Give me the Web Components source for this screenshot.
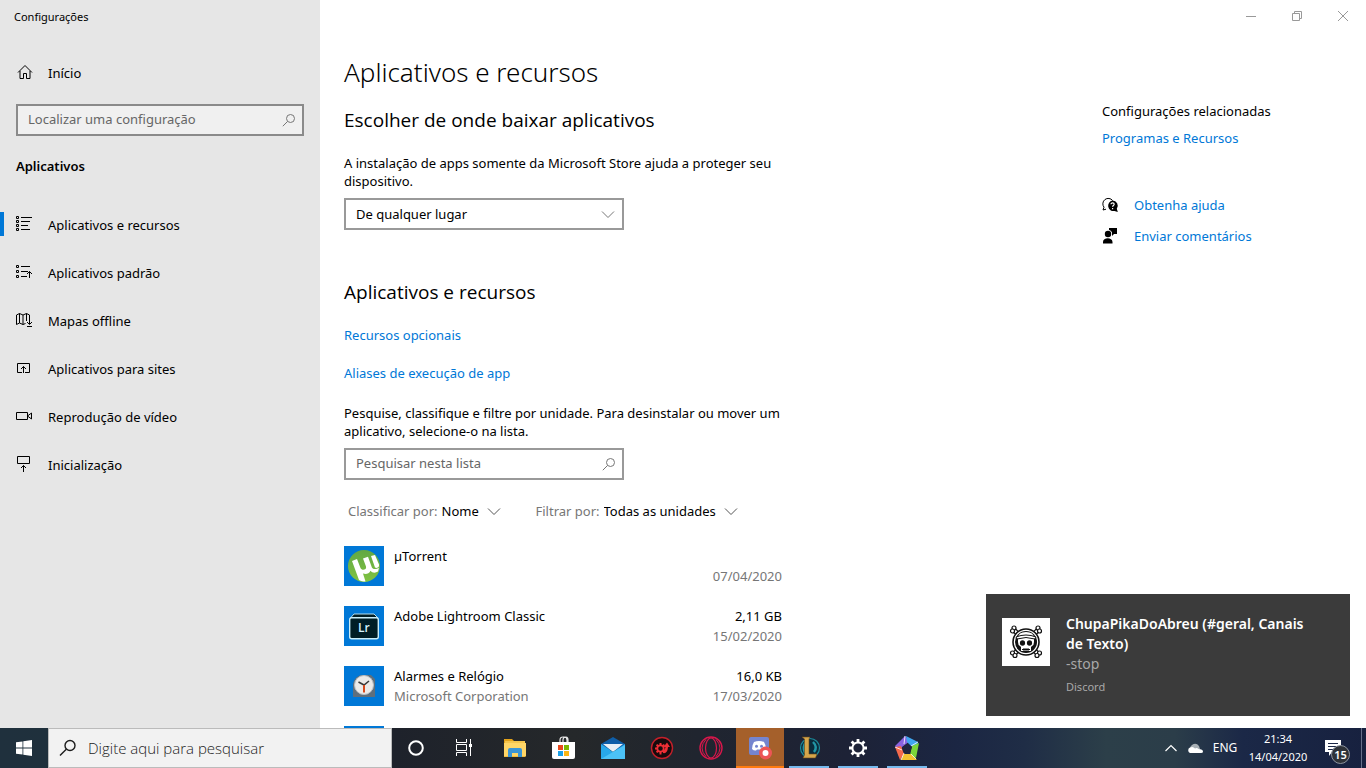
<!DOCTYPE html>
<html lang="pt-BR">
<head>
<meta charset="utf-8">
<title>Configurações</title>
<style>
html, body { margin: 0; height: 100%; }
body { font: 13px/18px "Noto Sans", "Open Sans", sans-serif; color: #000; overflow: hidden; }
</style>
</head>
<body>
<desk-top>
  <settings-window></settings-window>
  <toast-card heading="ChupaPikaDoAbreu (#geral, Canais de Texto)" message="-stop" source="Discord"></toast-card>
  <task-bar></task-bar>
</desk-top>

<script>
const ICONS = {
  home: [16, 16, '<path d="M2 8.500 9 1.500 16 8.500M4 7v7.500h3.500v-5h3v5H14V7" fill="none" stroke="currentColor"/>'],
  search: [14, 14, '<circle cx="8.5" cy="5.5" r="4" fill="none" stroke="currentColor"/><path d="M5.5 8.5.8 13.2" stroke="currentColor"/>'],
  searchBig: [18, 18, '<circle cx="11" cy="6.5" r="5" fill="none" stroke="currentColor" stroke-width="1.4"/><path d="M7.3 10.2 1 16.5" stroke="currentColor" stroke-width="1.4"/>'],
  chevron: [14, 14, '<path d="M1 4.500l6 6 6-6" fill="none" stroke="currentColor"/>'],
  chevronUp: [12, 12, '<path d="M.5 9 6 3.500 11.500 9" fill="none" stroke="currentColor" stroke-width="1.200"/>'],
  list: [16, 16, '<path d="M.5.500h2v2h-2zM.5 4.500h2v2h-2zM.5 8.500h2v2h-2zM.5 12.500h2v2h-2zM5 1.500h11M5 5.500h9M5 9.500h7M5 13.500h9" fill="none" stroke="currentColor"/>'],
  defaults: [16, 16, '<path d="M.5 1.500h2v2h-2zM.5 6.500h2v2h-2zM.5 11.500h2v2h-2zM5 2.500h9M5 7.500h7M5 12.500h6M13.500 14V7.500M11 10l2.500-2.500L16 10" fill="none" stroke="currentColor"/>'],
  map: [16, 16, '<path d="M.5 3v9.500l3-1.500 3.500 1.500 2.500-1M.5 3l3-1.500L7 3l3.500-1.500 3 1.500v3M3.500 1.500V11M7 3v9.500M10.500 1.500V9M13.500 5v7M11 10l2.500 2.500L16 10M11 14.500h5" fill="none" stroke="currentColor"/>'],
  sites: [16, 16, '<path d="M6 12.500H1.500v-9h12v9H9M7.500 13V6.500M5 9l2.500-2.500L10 9" fill="none" stroke="currentColor"/>'],
  video: [16, 16, '<path d="M.5 4.500h11v7H.5zM11.500 8l4-3v6z" fill="none" stroke="currentColor"/>'],
  startup: [16, 16, '<path d="M1.500.500h12v7h-12zM7.500 16V9.500M5 12l2.500-2.500L10 12" fill="none" stroke="currentColor"/>'],
  help: [16, 16, '<path d="M4 12.200 1 13l1-2.800A5.200 5.200 0 1 1 10.600 3.500" fill="none" stroke="currentColor"/><path d="M10.500 3.500a5.200 5.200 0 0 1 4.300 8.200L15.800 15l-3.300-1a5.300 5.300 0 1 1-2-10.500z" fill="currentColor"/><path d="M9 7.300c0-2 3.200-1.900 3.200 0 0 1.200-1.600 1.200-1.600 2.500M10.600 11v1.200" fill="none" stroke="#fff" stroke-width="1.200"/>'],
  feedback: [16, 16, '<circle cx="6" cy="6" r="3.200" fill="currentColor"/><path d="M1 15.500V14c0-5 9.500-5 9.500 0v1.500zM7 0h8v6h-3l-2 2V6C10.500 4 9 2.500 7 2z" fill="currentColor"/>'],
  minimize: [10, 10, '<path d="M0 5.500h10" stroke="currentColor"/>'],
  restore: [10, 10, '<path d="M.5 2.500h7v7h-7zM2.500 2V.500h7v7H8" fill="none" stroke="currentColor"/>'],
  close: [10, 10, '<path d="M0 0l10 10M10 0 0 10" stroke="currentColor"/>'],
  utorrent: [40, 40, '<path fill="#0078d7" d="M0 0h40v40H0z"/><defs><linearGradient id="g" x2="0" y2="1"><stop stop-color="#62a843"/><stop offset="1" stop-color="#80c342"/></linearGradient></defs><circle cx="20" cy="20" r="16" fill="url(#g)"/><path d="M8 15l5-2 3.500 9c1.200 3 6.500 2 5.500-1.500L19 12.500l5-1.700 3.800 10.500c.7 1.900 3 2.200 5.700 1.200l1.500-.5-1 3.500c-2.500 1.800-6 1.500-7.500-.8-1.500 3.200-4.500 3.800-7.500 2.800l2.500 8c-2.500 0-4.500-.400-6.500-1.500z" fill="#fff"/><path d="M27 10l4-1 4 9.500q.5 3-2.500 3.500l-1.500-.5z" fill="#fff"/>'],
  lightroom: [40, 40, '<path fill="#0078d7" d="M0 0h40v40H0z"/><path d="M6.500 12 10 8h20l4 4z" fill="#001e26" stroke="#b4dcea"/><rect x="5.700" y="11.700" width="28.600" height="21" rx="2" fill="#001e26" stroke="#c9eefa" stroke-width="1.400"/><text x="14" y="26" font-family="Open Sans" font-size="12" font-weight="600" fill="#d5f3ff">Lr</text>'],
  alarm: [40, 40, '<path fill="#0078d7" d="M0 0h40v40H0z"/><path d="M9 31V18a10 10 0 0 1 11-9h7l4 4v18z" fill="#5f6f7c"/><circle cx="20" cy="19" r="9.500" fill="#eceae8" stroke="#b9bfc4"/><path d="M14.500 16l5.500 3 5-4" fill="none" stroke="#3a3a3a" stroke-width="1.600"/><path d="M20 19v7.500" stroke="#d8491b" stroke-width="2"/>'],
  blank: [40, 40, '<path fill="#0078d7" d="M0 0h40v40H0z"/>'],
  windows: [16, 16, '<path d="M0 2.300 6.500 1.400v6.200H0zM7.300 1.300 16 0v7.600H7.300zM0 8.400h6.500v6.200L0 13.700zM7.300 8.400H16V16l-8.700-1.300z" fill="#fff"/>'],
  cortana: [18, 18, '<circle cx="9" cy="9" r="6.800" fill="none" stroke="#fff" stroke-width="2"/>'],
  taskview: [18, 18, '<path d="M1.500 0v3.500h10V0M1.500 17v-3.500h10V17M1.500 5.500h10v6h-10zM15.500 0v17" fill="none" stroke="#fff"/><path d="M14 5h3v3h-3z" fill="#fff"/>'],
  explorer: [24, 24, '<path d="M1 3h8l2 2h11v16H1z" fill="#e3a21a"/><path d="M2 5h20v3H2z" fill="#f5c64e"/><path d="M1 7h22v13.500H1z" fill="#ffd667"/><path d="M5 14q0-2 2-2h10q2 0 2 2v7h-4v-4H9v4H5z" fill="#3b95d6"/>'],
  store: [24, 24, '<path d="M8 7V4q0-3 3-3h1q3 0 3 3v3M11 7V4q0-3 3-3 2 0 2 3v3" fill="none" stroke="#e6e6e6" stroke-width="1.200"/><path d="M0 6h23v15q0 2-2 2H2q-2 0-2-2z" fill="#fff"/><path d="M6 9h5v5H6z" fill="#e8491d"/><path d="M12 9h5v5h-5z" fill="#7db700"/><path d="M6 15h5v5H6z" fill="#1ba1e8"/><path d="M12 15h5v5h-5z" fill="#fcb614"/>'],
  mail: [24, 24, '<path d="M0 8 12 1l12 7v6H0z" fill="#0f5ea8"/><path d="M2 8h20L12 16z" fill="#e9f0f6"/><path d="M0 8l12 8L24 8v15H0z" fill="#28a8ea"/><path d="M0 23 24 9v14z" fill="#4cc2f7"/>'],
  gear: [24, 24, '<circle cx="12" cy="12" r="10.500" fill="#170b0d" stroke="#c3202a" stroke-width="1.400"/><circle cx="10.500" cy="12.500" r="3.200" fill="none" stroke="#ef2f35" stroke-width="1.800"/><path d="M10.500 7v2M10.500 16v2.500M5 12.500h2M6.600 8.600 8 10M6.600 16.400 8 15M14.400 8.600 13 10" stroke="#ef2f35" stroke-width="2"/><path d="M13 13q2 2 2.500-2h-2L17 6.500 20 11h-2q-.5 7-5 6" fill="#ef2f35"/>'],
  opera: [24, 24, '<circle cx="12" cy="12" r="11" fill="none" stroke="#d8174b" stroke-width="1.400"/><ellipse cx="12" cy="12" rx="5.500" ry="10" fill="none" stroke="#d8174b" stroke-width="1.200"/><path d="M7 3.500q-8 8.500 0 17M17 3.500q8 8.500 0 17" fill="none" stroke="#d8174b"/>'],
  discord: [24, 24, '<path d="M3 1h16q2 0 2 2v18l-3-2H3q-2 0-2-2V3q0-2 2-2z" fill="#7585cf"/><path d="M6 6q5-2 10 0 2 3 2 7-2 2-4 1.500l-1-1H9l-1 1Q6 15 4 13q0-4 2-7z" fill="#fff"/><circle cx="8.500" cy="10.300" r="1.500" fill="#7585cf"/><circle cx="13.500" cy="10.300" r="1.500" fill="#7585cf"/><circle cx="17.500" cy="17" r="6.500" fill="#ed5555"/><circle cx="17.500" cy="17" r="3" fill="#fff"/>'],
  league: [24, 24, '<circle cx="13" cy="12" r="9.500" fill="#0a2c3c" stroke="#1c8b9a" stroke-width="1.200"/><path d="M16 6q5 5 1 10M9 6q-4 5-1 11" fill="none" stroke="#2196a6" stroke-width="2.400"/><path d="M5 1h8l-1 2v15h8l-1.500 4H6l1.500-3V3z" fill="#d6a64b" stroke="#65481a" stroke-width=".6"/>'],
  settings: [24, 24, '<circle cx="12" cy="12" r="5.600" fill="none" stroke="#fff" stroke-width="2"/><path d="M12 3v3M12 18v3M3 12h3M18 12h3M5.600 5.600l2.200 2.200M16.200 16.200l2.200 2.200M18.400 5.600l-2.200 2.200M7.800 16.200l-2.200 2.200" stroke="#fff" stroke-width="2.800"/>'],
  pentagon: [24, 24, '<path d="M0 10 10 0l5 5-8 6-1 4z" fill="#8a63e0"/><path d="M11 0l12 6-1 5-6-1-4-4z" fill="#3fa6f0"/><path d="M24 7l-3 15-6-3 2-9z" fill="#7bd63a"/><path d="M22 24H6l2-6h8z" fill="#f2c230"/><path d="M5 24 0 11l6-1 3 8z" fill="#f4694b"/><path d="M10 0 9 8M23 6l-7 4M21 23l-5-5M6 24l3-7M0 11l7 3" stroke="#fff" stroke-width=".8"/><path d="M12.500 7.500 17 11l-2 6H9.500L7 11.500z" fill="#202540"/>'],
  cloud: [16, 10, '<path d="M4 8a4 4 0 0 1 1-6q4-3 7 1l1 3z" fill="#a8b0b6"/><path d="M3 10a3 3 0 0 1 0-5.500Q6 3 8 5.500q2-1 3.500.500Q16 6 16 8.500q0 1.500-2 1.500z" fill="#fff"/>'],
  note: [16, 16, '<path d="M0 0h16v12H7l-3 4v-4H0z" fill="#fff"/><path d="M3 3.500h10M3 6.500h10M3 9.500h6" stroke="#1b2747"/>'],
  skull: [48, 48, '<path fill="#fff" d="M0 0h48v48H0z"/><path d="M11 11 37 37M37 11 11 37" stroke="#111" stroke-width="5"/><path d="M11 11 37 37M37 11 11 37" stroke="#fff" stroke-width="2.600"/><g fill="#fff" stroke="#111" stroke-width="1.200"><circle cx="12" cy="10" r="2"/><circle cx="10.500" cy="13" r="2"/><circle cx="36" cy="10" r="2"/><circle cx="37.500" cy="13" r="2"/><circle cx="10.500" cy="35" r="2"/><circle cx="13" cy="37.500" r="2"/><circle cx="37.500" cy="35" r="2"/><circle cx="35" cy="37.500" r="2"/></g><circle cx="24" cy="24" r="13" fill="#fff" stroke="#111" stroke-width="1.600"/><circle cx="24" cy="24" r="11" fill="#111"/><path d="M16 20q0-6 8-6t8 6v4q0 3-2 4l-1 1v4H19v-4l-1-1q-2-1-2-4z" fill="#fff"/><path d="M14 19q10-4 20 0l-1 2q-9-3-18 0z" fill="#fff" stroke="#111"/><ellipse cx="20.500" cy="25" rx="2.600" ry="2.800" fill="#111"/><ellipse cx="27.500" cy="25" rx="2.600" ry="2.800" fill="#111"/><path d="M20 31.500h8M22 30v3M24 30v3M26 30v3" stroke="#111"/>']
};

/* Registers an element whose open shadow root is filled from its own markup and styles. */
function define(name, css, markup) {
  customElements.define(name, class extends HTMLElement {
    constructor() {
      super();
      const t = document.createElement('template');
      t.innerHTML = `<style>:host,*{box-sizing:border-box}h1,h2,h3,p{margin:0;padding:0}button,input,select{font:inherit;color:inherit;border:0;margin:0;padding:0;background:none;border-radius:0;outline:0}a{color:#0078d7;text-decoration:none}${css}</style>`
        + (typeof markup === 'function' ? markup(n => this.getAttribute(n) || '') : markup);
      this.attachShadow({ mode: 'open' }).append(t.content.cloneNode(true));
    }
  });
}

define('ui-icon', ':host{display:block;flex:none}svg{display:block;overflow:visible}', a => {
  const [w, h, body] = ICONS[a('name')];
  return `<svg width="${w}" height="${h}" viewBox="0 0 ${w} ${h}" aria-hidden="true">${body}</svg>`;
});

define('search-box', `
  :host{display:block}
  label{display:flex;align-items:center;height:32px;border:2px solid var(--line,#999);background:var(--fill,#fff);padding:0 6px 0 10px;color:#767676}
  input{flex:1;min-width:0;color:#000;padding-bottom:2px}
  input::placeholder{color:#666;opacity:1}`,
  a => `<label><input type="search" aria-label="${a('hint')}" placeholder="${a('hint')}"><ui-icon name="search"></ui-icon></label>`);

define('nav-item', `
  :host{display:block}
  a{display:flex;align-items:center;gap:16px;height:48px;padding-left:16px;color:#000;position:relative}
  span{padding-top:2px}
  :host([current]) a::before{content:"";position:absolute;left:0;top:12px;width:4px;height:24px;background:#0078d7}`,
  a => `<a href="#"><ui-icon name="${a('icon')}"></ui-icon><span><slot></slot></span></a>`);

define('side-bar', `
  :host{display:block;background:#e6e6e6;overflow:hidden}
  .title{font-size:11px;line-height:34px;padding-left:14px}
  .home{margin-top:14px}
  search-box{margin:8px 16px 0;--line:#8a8a8a;--fill:#f0f0f0}
  h2{font-size:13px;line-height:20px;font-weight:600;margin:20px 16px 24px}`, `
  <div class="title">Configurações</div>
  <nav-item class="home" icon="home">Início</nav-item>
  <search-box hint="Localizar uma configuração"></search-box>
  <h2>Aplicativos</h2>
  <nav>
    <nav-item icon="list" current>Aplicativos e recursos</nav-item>
    <nav-item icon="defaults">Aplicativos padrão</nav-item>
    <nav-item icon="map">Mapas offline</nav-item>
    <nav-item icon="sites">Aplicativos para sites</nav-item>
    <nav-item icon="video">Reprodução de vídeo</nav-item>
    <nav-item icon="startup">Inicialização</nav-item>
  </nav>`);

define('window-controls', `
  :host{display:flex;justify-content:flex-end;color:#999}
  button{width:46px;height:32px;display:grid;place-items:center}`, `
  <button aria-label="Minimizar"><ui-icon name="minimize"></ui-icon></button>
  <button aria-label="Restaurar"><ui-icon name="restore"></ui-icon></button>
  <button aria-label="Fechar"><ui-icon name="close"></ui-icon></button>`);

define('drop-down', `
  :host{display:block}
  label{display:grid;align-items:center;height:32px;border:2px solid #999}
  select{appearance:none;grid-area:1/1;height:28px;padding:0 32px 0 10px}
  ui-icon{grid-area:1/1;justify-self:end;margin-right:7px;color:#777;pointer-events:none}`,
  a => `<label><select aria-label="${a('label')}"><option>${a('value')}</option></select><ui-icon name="chevron"></ui-icon></label>`);

define('filter-pick', `
  :host{display:block}
  label{display:flex;align-items:center;color:#767676}
  select{appearance:none;color:#000;margin-left:4px;padding-right:7px;height:18px}
  ui-icon{color:#555}`,
  a => `<label>${a('label')}<select><option>${a('value')}</option></select><ui-icon name="chevron"></ui-icon></label>`);

define('app-row', `
  :host{display:flex;gap:10px;line-height:20px}
  .text{flex:1}
  .meta{text-align:right;padding-right:2px}
  .sub{color:#767676}
  div div{min-height:20px}`,
  a => `<ui-icon name="${a('icon')}"></ui-icon>
  <div class="text"><div><slot></slot></div><div class="sub">${a('maker')}</div></div>
  <div class="meta"><div>${a('size')}</div><div class="sub">${a('date')}</div></div>`);

define('app-page', `
  :host{display:block}
  h1{font-size:26px;line-height:36px;font-weight:300}
  h2{font-size:19px;line-height:28px;font-weight:400;font-family:"Open Sans",sans-serif}
  .source{margin-top:16px}
  p{margin-top:20px}
  .field{width:280px;margin-top:8px}
  .list{margin-top:48px}
  .link{display:block;width:max-content;margin-top:20px}
  .list p{margin-top:22px}
  .filters{display:flex;gap:35px;padding-left:4px;margin:22px 0 26px}
  .apps{display:grid;gap:20px}`, `
  <h1>Aplicativos e recursos</h1>
  <section class="source">
    <h2>Escolher de onde baixar aplicativos</h2>
    <p>A instalação de apps somente da Microsoft Store ajuda a proteger seu dispositivo.</p>
    <drop-down class="field" label="Origem dos aplicativos" value="De qualquer lugar"></drop-down>
  </section>
  <section class="list">
    <h2>Aplicativos e recursos</h2>
    <a class="link" href="#">Recursos opcionais</a>
    <a class="link" href="#">Aliases de execução de app</a>
    <p>Pesquise, classifique e filtre por unidade. Para desinstalar ou mover um aplicativo, selecione-o na lista.</p>
    <search-box class="field" hint="Pesquisar nesta lista"></search-box>
    <div class="filters">
      <filter-pick label="Classificar por:" value="Nome"></filter-pick>
      <filter-pick label="Filtrar por:" value="Todas as unidades"></filter-pick>
    </div>
    <div class="apps">
      <app-row icon="utorrent" date="07/04/2020">µTorrent</app-row>
      <app-row icon="lightroom" size="2,11 GB" date="15/02/2020">Adobe Lightroom Classic</app-row>
      <app-row icon="alarm" maker="Microsoft Corporation" size="16,0 KB" date="17/03/2020">Alarmes e Relógio</app-row>
      <app-row icon="blank"></app-row>
    </div>
  </section>`);

define('related-links', `
  :host{display:block}
  h3{font-size:13px;font-weight:400}
  a{display:flex;align-items:center;gap:16px;width:max-content}
  .programs{margin:9px 0 49px}
  .support{display:grid;gap:13px}
  ui-icon{color:#000}`, `
  <h3>Configurações relacionadas</h3>
  <a class="programs" href="#">Programas e Recursos</a>
  <div class="support">
    <a href="#"><ui-icon name="help"></ui-icon>Obtenha ajuda</a>
    <a href="#"><ui-icon name="feedback"></ui-icon>Enviar comentários</a>
  </div>`);

define('settings-window', `
  :host{display:grid;grid-template-columns:320px 1fr;min-height:0;background:#fff;overflow:hidden}
  .content{min-width:0;overflow:hidden}
  .columns{display:flex;justify-content:space-between;padding:22px 24px 0}
  app-page{flex:0 1 440px}
  related-links{width:240px;margin-top:48px}`, `
  <side-bar></side-bar>
  <div class="content">
    <window-controls></window-controls>
    <div class="columns"><app-page></app-page><related-links></related-links></div>
  </div>`);

define('toast-card', `
  :host{display:flex;gap:16px;position:absolute;right:16px;bottom:52px;width:364px;padding:20px 16px;background:#3b3b3b;color:#fff;line-height:20px}
  ui-icon{margin-top:4px}
  .text{flex:1;padding-right:24px}
  h2{font-size:14px;line-height:20px;font-weight:600}
  .message{font-size:14px;color:#a8a8a8}
  .source{font-size:11px;line-height:18px;color:#a8a8a8;margin-top:4px}`,
  a => `<ui-icon name="skull"></ui-icon><div class="text"><h2>${a('heading')}</h2><p class="message">${a('message')}</p><p class="source">${a('source')}</p></div>`);

define('task-button', `
  :host{display:block}
  button{width:48px;height:40px;display:grid;place-items:center}
  :host([open]) button{background:linear-gradient(#76b9ed,#76b9ed) center bottom/40px 2px no-repeat}
  :host([alert]) button{background:#a5602b;border-bottom:2px solid #ff7b0f;padding-top:2px}`,
  a => `<button aria-label="${a('label')}"><ui-icon name="${a('icon')}"></ui-icon></button>`);

define('system-tray', `
  :host{display:flex;align-items:center;color:#fff;font-size:12px;height:40px}
  button{display:grid;place-items:center;height:40px}
  .up{width:24px}.cloud{width:24px}.lang{width:36px}
  .clock{width:70px;line-height:18px;font-size:11px;text-align:center}
  .notes{width:49px;position:relative;border-right:1px solid #66708a;margin-right:4px}
  .notes ui-icon{position:absolute;left:12px;top:12px}
  .badge{position:absolute;left:18px;top:17px;width:19px;height:19px;border-radius:50%;background:#2e3238;border:1px solid #8d949e;font-size:11px;line-height:17px;font-weight:600;text-align:center}`, `
  <button class="up" aria-label="Mostrar ícones ocultos"><ui-icon name="chevronUp"></ui-icon></button>
  <button class="cloud" aria-label="OneDrive"><ui-icon name="cloud"></ui-icon></button>
  <button class="lang">ENG</button>
  <button class="clock"><span>21:34<br>14/04/2020</span></button>
  <button class="notes" aria-label="Notificações"><ui-icon name="note"></ui-icon><span class="badge">15</span></button>`);

define('task-bar', `
  :host{display:flex;height:40px;background:linear-gradient(90deg,#1f303d 0,#1f303c 4%,#1e222b 29%,#25282a 42%,#20252f 51%,#1d2236 62%,#1b2643 70%,#1f2d46 75%,#2c3f49 81%,#2b3d49 86%,#1b2847 91%,#17213f 100%)}
  .search{display:flex;align-items:center;gap:11px;width:344px;border:1px solid #bbb;background:#f2f2f2;padding-left:10px;color:#1b1b1b}
  input{flex:1;min-width:0;font-family:"Open Sans",sans-serif;font-size:15px;font-weight:300}
  input::placeholder{color:#1b1b1b;opacity:1}
  .pins{display:flex;gap:1px;margin-left:3px}
  system-tray{margin-left:auto}`, `
  <task-button icon="windows" label="Iniciar"></task-button>
  <label class="search"><ui-icon name="searchBig"></ui-icon><input aria-label="Pesquisar" placeholder="Digite aqui para pesquisar"></label>
  <task-button icon="cortana" label="Cortana"></task-button>
  <task-button icon="taskview" label="Visão de tarefas"></task-button>
  <div class="pins">
    <task-button icon="explorer" label="Explorador de Arquivos"></task-button>
    <task-button icon="store" label="Microsoft Store"></task-button>
    <task-button icon="mail" label="Email"></task-button>
    <task-button icon="gear" label="Driver Booster"></task-button>
    <task-button icon="opera" label="Opera GX"></task-button>
    <task-button icon="discord" label="Discord" alert></task-button>
    <task-button icon="league" label="League of Legends" open></task-button>
    <task-button icon="settings" label="Configurações" open></task-button>
    <task-button icon="pentagon" label="Aplicativo" open></task-button>
  </div>
  <system-tray></system-tray>`);

define('desk-top', `
  :host{display:grid;grid-template-rows:minmax(0,1fr) 40px;height:100vh;position:relative}
  ::slotted(settings-window),::slotted(task-bar){min-width:0}`, '<slot></slot>');
</script>
</body>
</html>
